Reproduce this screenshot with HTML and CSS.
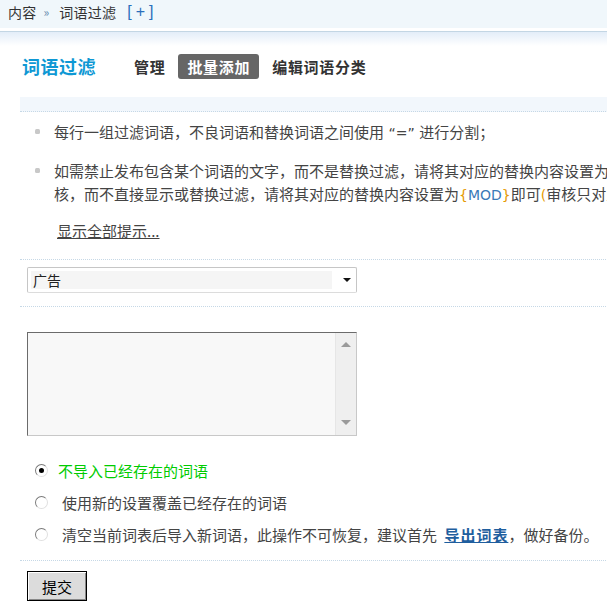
FILE: index.html
```html
<!DOCTYPE html>
<html lang="zh-CN">
<head>
<meta charset="utf-8">
<title>词语过滤</title>
<link rel="stylesheet" href="styles.css">
</head>
<body>
<div class="page">
  <div class="topbar">
    <div class="crumb">
      <span class="crumb-item">内容</span><span class="sep">»</span><span class="crumb-item">词语过滤</span><a class="plus">[+]</a>
    </div>
  </div>
  <div class="main">
    <div class="heading">
      <h3 class="title">词语过滤</h3>
      <ul class="tabs">
        <li class="tab">管理</li>
        <li class="tab active">批量添加</li>
        <li class="tab">编辑词语分类</li>
      </ul>
    </div>
    <div class="tips-head"></div>
    <ul class="tips">
      <li>每行一组过滤词语，不良词语和替换词语之间使用<span class="latin"> “=” </span>进行分割；</li>
      <li>如需禁止发布包含某个词语的文字，而不是替换过滤，请将其对应的替换内容设置为<span class="latin">{BANNED}</span>即可；如需当用户发布包含某个词语的文字时，需要通过人工审<br>核，而不直接显示或替换过滤，请将其对应的替换内容设置为<span class="latin"><span class="brace">{</span><span class="kw">MOD</span><span class="brace">}</span></span>即可<span class="latin brace">(</span>审核只对主题有效)。</li>
    </ul>
    <p class="more"><a>显示全部提示...</a></p>
    <div class="select-row">
      <div class="select">
        <span class="val">广告</span>
        <span class="arrow"></span>
      </div>
    </div>
    <div class="text-row">
      <div class="textbox">
        <div class="scroll">
          <span class="up"></span>
          <span class="down"></span>
        </div>
      </div>
    </div>
    <div class="options">
      <div class="opt"><span class="radio checked"></span><span class="lbl green">不导入已经存在的词语</span></div>
      <div class="opt"><span class="radio"></span><span class="lbl wide">使用新的设置覆盖已经存在的词语</span></div>
      <div class="opt"><span class="radio"></span><span class="lbl wide">清空当前词表后导入新词语，此操作不可恢复，建议首先 <a class="link">导出词表</a>，做好备份。</span></div>
    </div>
    <div class="submit-row">
      <button class="btn" type="button">提交</button>
    </div>
  </div>
</div>
</body>
</html>
```

FILE: styles.css
```css
html, body {
  margin: 0;
  padding: 0;
  overflow: hidden;
  background: #fff;
}
body {
  font-family: "Noto Sans CJK SC", "Liberation Sans", sans-serif;
  color: #444;
}
.page {
  width: 1000px;
}
.topbar {
  background: #fff;
  border-bottom: 1px solid #c3d6e4;
  padding-bottom: 3px;
}
.crumb {
  height: 28px;
  background: #f0f7fb;
  padding-left: 8px;
  font-size: 14px;
  line-height: 24px;
  color: #333;
  display: flex;
  align-items: flex-start;
}
.crumb-item {
  letter-spacing: 0.25px;
}
.crumb .sep {
  font-size: 12px;
  color: #6a8db0;
  margin: 0 10px 0 7px;
}
.crumb .plus {
  font-family: "Liberation Sans", sans-serif;
  font-size: 16px;
  letter-spacing: 4px;
  color: #2a6ebb;
  margin-left: 11px;
  line-height: 23px;
}
.main {
  background: linear-gradient(#e3edf8, #fff 14px);
  padding-left: 20px;
}
.heading {
  display: flex;
  align-items: center;
  height: 25px;
  padding-top: 22px;
}
.title {
  margin: 0 29px 0 2px;
  font-size: 18px;
  line-height: 25px;
  letter-spacing: 0.5px;
  font-weight: bold;
  color: #0e98d4;
}
.tabs {
  list-style: none;
  margin: 0;
  padding: 0;
  display: flex;
  gap: 4px;
}
.tab {
  padding: 0 9px;
  height: 25px;
  line-height: 25px;
  font-size: 15px;
  letter-spacing: 0.7px;
  font-weight: bold;
  color: #333;
  border-radius: 3px;
}
.tab.active {
  background: #666;
  color: #fff;
}
.tips-head {
  margin-top: 18px;
  height: 14px;
  background: #f2f7fc;
  border-bottom: 1px dotted #c6d8e6;
}
.tips {
  list-style: none;
  margin: 0;
  padding: 8px 0 0 0;
  font-size: 15px;
  line-height: 23px;
  white-space: nowrap;
}
.tips li {
  position: relative;
  padding-left: 34px;
  margin-bottom: 16px;
}
.tips li:last-child {
  margin-bottom: 14px;
}
.tips li::before {
  content: "";
  position: absolute;
  left: 15px;
  top: 9px;
  width: 5px;
  height: 5px;
  border-radius: 1.5px;
  background: #c8c8c8;
}
.latin {
  font-family: "DejaVu Sans", "Liberation Sans", sans-serif;
  font-size: 14px;
  line-height: 1;
}
.brace {
  color: #e69a00;
}
.kw {
  color: #3a7ab8;
}
.more {
  margin: 0 0 17px 0;
  padding-left: 37px;
  font-size: 15px;
  line-height: 23px;
}
.more a {
  color: #444;
  text-decoration: underline;
}
.select-row {
  border-top: 1px dotted #c6d8e6;
  border-bottom: 1px dotted #c6d8e6;
  padding: 7px 0 13px 7px;
}
.select {
  box-sizing: border-box;
  width: 330px;
  height: 26px;
  border: 1px solid #c6c6c6;
  border-bottom-color: #dcdcdc;
  border-radius: 2px;
  padding: 3px;
  display: flex;
  align-items: center;
}
.select .val {
  box-sizing: border-box;
  width: 301px;
  height: 18px;
  background: #f5f5f5;
  font-size: 14px;
  line-height: 18px;
  padding-left: 2px;
  color: #222;
}
.select .arrow {
  margin-left: auto;
  margin-right: 2px;
  width: 0;
  height: 0;
  border-top: 4px solid #111;
  border-left: 4px solid transparent;
  border-right: 4px solid transparent;
}
.text-row {
  padding: 25px 0 0 7px;
}
.textbox {
  box-sizing: border-box;
  width: 330px;
  height: 104px;
  border: 1px solid;
  border-color: #6b6b6b #c8c8c8 #c8c8c8 #6b6b6b;
  background: #f8f8f8;
  display: flex;
  justify-content: flex-end;
}
.scroll {
  width: 20px;
  background: #efefef;
  border-left: 1px solid #e6e6e6;
  display: flex;
  flex-direction: column;
  justify-content: space-between;
  align-items: center;
  padding: 9px 0 10px;
}
.scroll .up {
  width: 0;
  height: 0;
  border-bottom: 5px solid #9a9a9a;
  border-left: 5px solid transparent;
  border-right: 5px solid transparent;
}
.scroll .down {
  width: 0;
  height: 0;
  border-top: 5px solid #9a9a9a;
  border-left: 5px solid transparent;
  border-right: 5px solid transparent;
}
.options {
  margin-top: 18px;
  padding-left: 15px;
}
.opt {
  height: 32px;
  display: flex;
  align-items: center;
  font-size: 15px;
  white-space: nowrap;
}
.radio {
  box-sizing: border-box;
  width: 13px;
  height: 13px;
  border-radius: 50%;
  border: 1px solid;
  border-color: #7a7a7a #e0e0e0 #e0e0e0 #7a7a7a;
  background: #fff;
  display: flex;
  align-items: center;
  justify-content: center;
  flex: none;
}
.radio.checked::after {
  content: "";
  width: 5px;
  height: 5px;
  border-radius: 50%;
  background: #000;
}
.lbl {
  margin-left: 10px;
  color: #444;
}
.lbl.wide {
  margin-left: 14px;
}
.lbl.green {
  color: #0c0;
}
.link {
  color: #1f5e9e;
  font-weight: bold;
  letter-spacing: 1px;
  margin-left: 4px;
  text-decoration: underline;
}
.submit-row {
  margin-top: 10px;
  border-top: 1px dotted #c6d8e6;
  padding: 10px 0 20px 7px;
}
.btn {
  box-sizing: border-box;
  width: 60px;
  height: 30px;
  border: 1px solid #000;
  border-radius: 0;
  background: #dcdcdc;
  box-shadow: inset 1px 1px 0 #fff, inset -1px -1px 0 #888;
  font-family: "Noto Sans CJK SC", sans-serif;
  font-size: 15px;
  color: #000;
  padding: 0;
}
```
